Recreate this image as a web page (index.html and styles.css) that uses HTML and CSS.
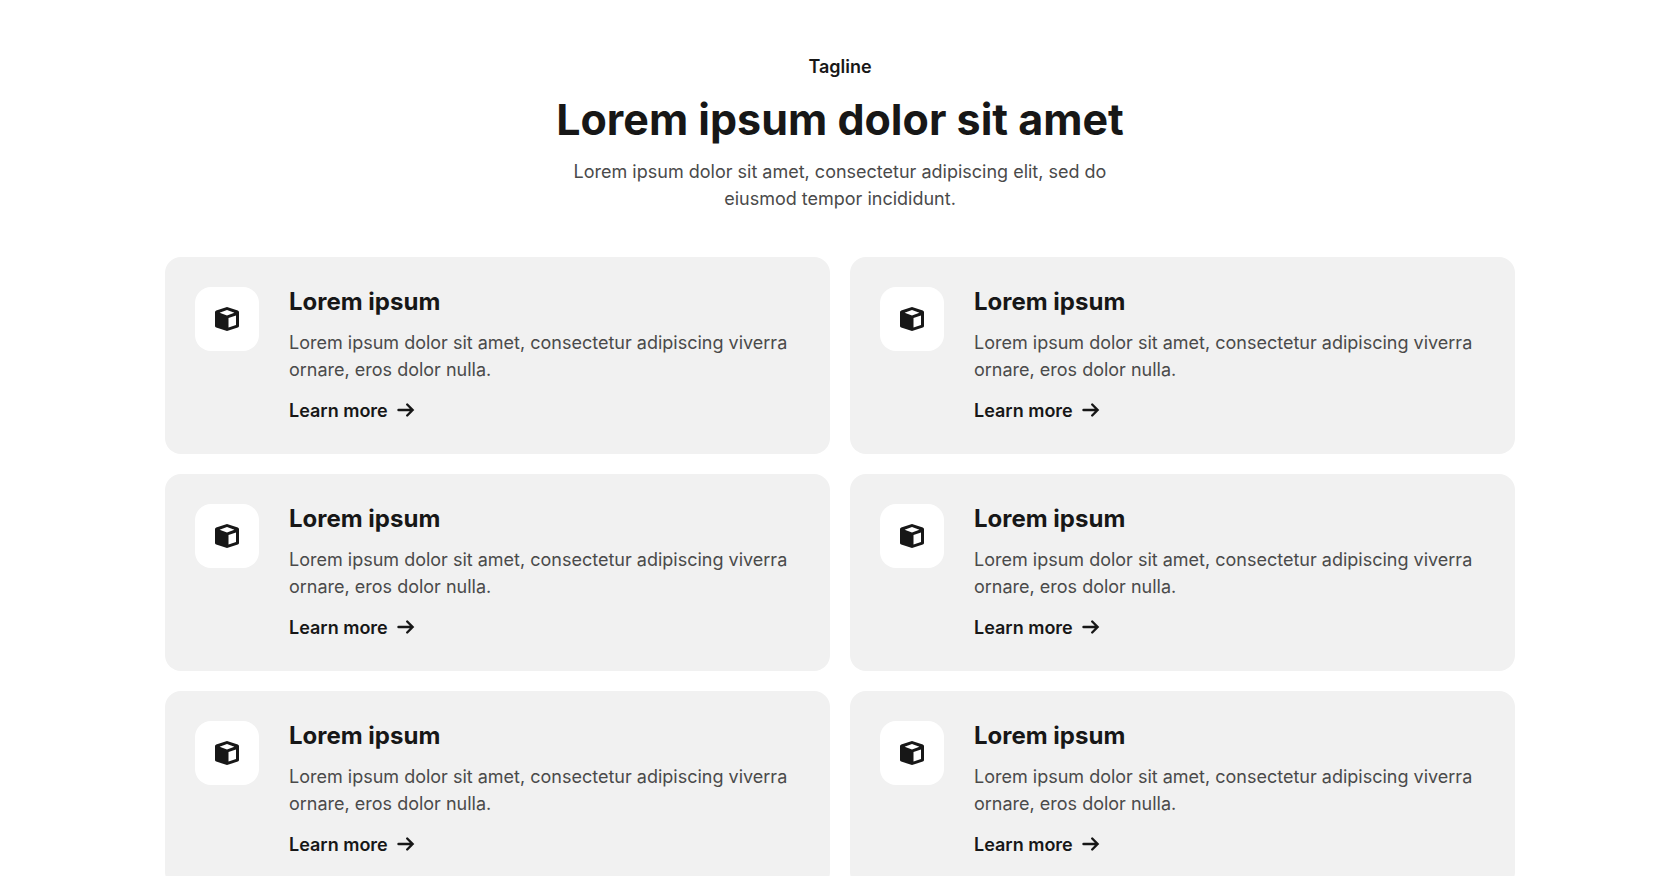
FILE: index.html
```html
<!DOCTYPE html>
<html lang="en">
<head>
    <meta charset="UTF-8">
    <meta name="viewport" content="width=device-width, initial-scale=1.0">
    <title>Features</title>
    <link rel="stylesheet" href="styles.css">
</head>
<body>
    <svg class="sprite" aria-hidden="true">
        <symbol id="cube" viewBox="0 0 32 32">
            <path fill-rule="evenodd" d="M16 4 26.800 7.400Q28 7.900 28 9.100V22.900Q28 24.100 26.800 24.600L16 28 5.200 24.600Q4 24.100 4 22.900V9.100Q4 7.900 5.200 7.400ZM16 7 8.600 9.700 16 12.600 23.400 9.700ZM17.500 15.100V24.600L25 22V12.500Z"/>
        </symbol>
        <symbol id="arrow" viewBox="0 0 18 18">
            <path d="M1.500 8H15.500M10.200 2.500 15.600 8 10.200 13.500" fill="none" stroke="currentColor" stroke-width="2.400" stroke-linecap="round"/>
        </symbol>
    </svg>
    <section class="features">
        <header class="intro">
            <p class="tagline">Tagline</p>
            <h1>Lorem ipsum dolor sit amet</h1>
            <p class="text">Lorem ipsum dolor sit amet, consectetur adipiscing elit, sed do eiusmod tempor incididunt.</p>
        </header>
        <div class="cards">
            <article class="card">
                <div class="icon"><svg><use href="#cube"/></svg></div>
                <div class="content">
                    <h2>Lorem ipsum</h2>
                    <p class="text">Lorem ipsum dolor sit amet, consectetur adipiscing viverra ornare, eros dolor nulla.</p>
                    <a href="#" class="link">Learn more <svg><use href="#arrow"/></svg></a>
                </div>
            </article>
            <article class="card">
                <div class="icon"><svg><use href="#cube"/></svg></div>
                <div class="content">
                    <h2>Lorem ipsum</h2>
                    <p class="text">Lorem ipsum dolor sit amet, consectetur adipiscing viverra ornare, eros dolor nulla.</p>
                    <a href="#" class="link">Learn more <svg><use href="#arrow"/></svg></a>
                </div>
            </article>
            <article class="card">
                <div class="icon"><svg><use href="#cube"/></svg></div>
                <div class="content">
                    <h2>Lorem ipsum</h2>
                    <p class="text">Lorem ipsum dolor sit amet, consectetur adipiscing viverra ornare, eros dolor nulla.</p>
                    <a href="#" class="link">Learn more <svg><use href="#arrow"/></svg></a>
                </div>
            </article>
            <article class="card">
                <div class="icon"><svg><use href="#cube"/></svg></div>
                <div class="content">
                    <h2>Lorem ipsum</h2>
                    <p class="text">Lorem ipsum dolor sit amet, consectetur adipiscing viverra ornare, eros dolor nulla.</p>
                    <a href="#" class="link">Learn more <svg><use href="#arrow"/></svg></a>
                </div>
            </article>
            <article class="card">
                <div class="icon"><svg><use href="#cube"/></svg></div>
                <div class="content">
                    <h2>Lorem ipsum</h2>
                    <p class="text">Lorem ipsum dolor sit amet, consectetur adipiscing viverra ornare, eros dolor nulla.</p>
                    <a href="#" class="link">Learn more <svg><use href="#arrow"/></svg></a>
                </div>
            </article>
            <article class="card">
                <div class="icon"><svg><use href="#cube"/></svg></div>
                <div class="content">
                    <h2>Lorem ipsum</h2>
                    <p class="text">Lorem ipsum dolor sit amet, consectetur adipiscing viverra ornare, eros dolor nulla.</p>
                    <a href="#" class="link">Learn more <svg><use href="#arrow"/></svg></a>
                </div>
            </article>
        </div>
    </section>
</body>
</html>
```
FILE: styles.css
```css
* {
    box-sizing: border-box;
}

body {
    margin: 0;
    background-color: #fff;
    color: #171717;
    font-family: Inter, sans-serif;
    font-size: 18px;
    line-height: 27px;
}

h1, h2, p {
    margin: 0;
}

.sprite {
    display: none;
}

.features {
    max-width: 1398px;
    margin: 0 auto;
    padding: 53px 24px;
}

.intro {
    max-width: 590px;
    margin: 0 auto 45px;
    text-align: center;
}

.tagline {
    font-weight: 600;
    margin-bottom: 12px;
}

h1 {
    font-size: 43px;
    line-height: 54px;
    font-weight: 700;
    margin-bottom: 12px;
}

.text {
    color: #4a4a4a;
}

.cards {
    display: grid;
    grid-template-columns: 1fr 1fr;
    gap: 20px;
}

.card {
    display: flex;
    gap: 30px;
    padding: 30px;
    background-color: #f1f1f1;
    border-radius: 16px;
}

.icon {
    flex: none;
    display: flex;
    align-items: center;
    justify-content: center;
    width: 64px;
    height: 64px;
    background-color: #fff;
    border-radius: 16px;
}

.icon svg {
    width: 32px;
    height: 32px;
    fill: #171717;
}

h2 {
    font-size: 24px;
    line-height: 29px;
    font-weight: 700;
    margin-bottom: 13px;
}

.link {
    display: inline-flex;
    align-items: center;
    gap: 9px;
    margin-top: 14px;
    color: #171717;
    font-weight: 600;
    text-decoration: none;
}

.link svg {
    width: 18px;
    height: 18px;
}

@media (max-width: 900px) {
    .cards {
        grid-template-columns: 1fr;
    }
}
```
